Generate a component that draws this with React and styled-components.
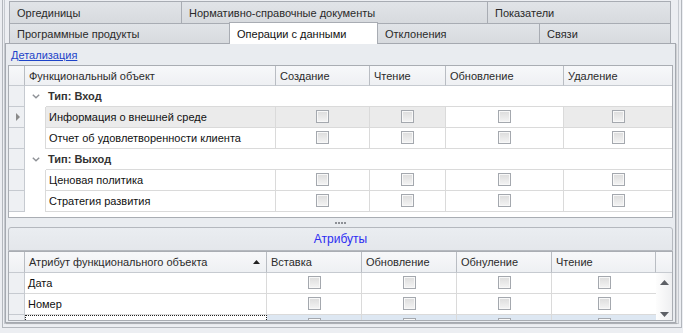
import React from 'react';
import styled, { createGlobalStyle } from 'styled-components';

const GlobalStyle = createGlobalStyle`
  html, body {
    margin: 0;
    padding: 0;
    background: #eceef2;
  }
  body {
    font-family: 'Liberation Sans', Arial, sans-serif;
    font-size: 11px;
    color: #1e1e1e;
  }
  * {
    box-sizing: border-box;
  }
`;

const Screen = styled.div`
  width: 683px;
  height: 333px;
  overflow: hidden;
  background: #eceef2;
`;

const OuterFrame = styled.div`
  margin-left: 2px;
  width: 680px;
  height: 328px;
  border: 1px solid #b3b7bd;
  border-top: 0;
  padding: 0 3px 3px 1px;
  display: flex;
`;

const InnerFrame = styled.div`
  flex: 1;
  min-height: 0;
  display: flex;
  flex-direction: column;
  border: 1px solid #c5c9cf;
  border-top: 0;
  padding-right: 2px;
`;

const TabStrip = styled.div`
  display: flex;
  flex-direction: column;
  padding: 1px 0 0 4px;
`;

const TabRow = styled.div`
  display: flex;
  height: ${(p) => p.$h}px;
`;

const Tab = styled.div`
  width: ${(p) => p.$w}px;
  display: flex;
  align-items: center;
  padding-left: 7px;
  border-top: 1px solid #a8acb3;
  border-left: 1px solid #a8acb3;
  border-right: ${(p) => (p.$last ? '1px solid #a8acb3' : '0')};
  background: linear-gradient(#e1e4e8, #d7dade);
  color: #2a2a2a;
  white-space: nowrap;

  &.active {
    position: relative;
    z-index: 1;
    margin-top: -1px;
    height: 22px;
    border-right: 1px solid #a8acb3;
    background: #fff;
    color: #111;
  }
  &.active + & {
    border-left: 0;
  }
`;

const Panel = styled.div`
  flex: 1;
  min-height: 0;
  display: flex;
  flex-direction: column;
  border: 1px solid #a5a9b0;
  background: #e9ecf0;
  box-shadow: 1px 1px 1px rgba(0, 0, 0, 0.12);
  padding: 0 1px 1px 1px;
`;

const LinkRow = styled.div`
  height: 21px;
  flex: none;
  display: flex;
  align-items: center;
  padding-left: 4px;
`;

const DetailLink = styled.a`
  color: #1d43c9;
  text-decoration: underline;
  cursor: pointer;
`;

const GridBox = styled.div`
  margin: 0 1px;
  height: ${(p) => (p.$h ? `${p.$h}px` : 'auto')};
  flex: ${(p) => (p.$h ? 'none' : '1')};
  min-height: 0;
  border: 1px solid #a9adb3;
  background: #fff;
  overflow: hidden;
`;

const Row = styled.div`
  display: grid;
  grid-template-columns: ${(p) => p.$cols};
  height: ${(p) => p.$h || 21}px;
`;

const HeadCell = styled.div`
  display: flex;
  align-items: center;
  justify-content: space-between;
  padding: 0 6px 0 4px;
  background: linear-gradient(#f7f8fa, #eef0f3);
  border-right: 1px solid #b9bdc3;
  border-bottom: 1px solid #c6cad0;
  color: #2b2b2b;
  white-space: nowrap;
  &:last-child {
    border-right: 0;
  }
`;

const Indicator = styled.div`
  display: flex;
  align-items: center;
  justify-content: center;
  background: #eef0f3;
  border-right: 1px solid #c6cad0;
  border-bottom: 1px solid #c6cad0;
`;

const Indent = styled.div`
  display: flex;
  align-items: center;
  justify-content: center;
  border-right: ${(p) => (p.$line ? '1px solid #dadada' : '0')};
`;

const Cell = styled.div`
  display: flex;
  align-items: ${(p) => (p.$top ? 'flex-start' : 'center')};
  padding-top: ${(p) => (p.$top ? 3 : 0)}px;
  justify-content: ${(p) => (p.$center ? 'center' : 'flex-start')};
  padding-left: ${(p) => (p.$center ? 0 : 3)}px;
  border-right: 1px solid #dadada;
  border-bottom: 1px solid #dadada;
  background: ${(p) => p.$bg || '#fff'};
  color: #111;
  white-space: nowrap;
  &:last-child {
    border-right: 0;
  }
`;

const FocusCell = styled(Cell)`
  border: 1px dotted #222;
  border-bottom: 0;
`;

const GroupCell = styled.div`
  display: flex;
  align-items: center;
  padding-left: 2px;
  font-weight: bold;
  color: #333;
  border-bottom: 1px solid #dadada;
`;

const RowMark = styled.span`
  width: 0;
  height: 0;
  border-left: 4px solid #8a8a8a;
  border-top: 4px solid transparent;
  border-bottom: 4px solid transparent;
  margin-left: 2px;
`;

const Check = styled.span`
  width: 13px;
  height: 13px;
  margin-top: ${(p) => (p.$cut ? '0' : '-2px')};
  border: 1px solid #a4a8ae;
  background: linear-gradient(#dcdcdc, #f4f4f4);
  box-shadow: inset 0 0 0 1px #f8f8f8;
`;

const Splitter = styled.div`
  height: 9px;
  flex: none;
  display: flex;
  align-items: center;
  justify-content: center;
`;

const Dots = styled.span`
  width: 12px;
  height: 2px;
  background: repeating-linear-gradient(to right, #8d9096 0 2px, transparent 2px 3px);
`;

const SectionHeader = styled.div`
  margin: 0 1px;
  height: 24px;
  flex: none;
  display: flex;
  align-items: center;
  justify-content: center;
  border: 1px solid #b4b8be;
  border-radius: 3px 3px 0 0;
  background: linear-gradient(#eaedf1, #e4e7eb);
  color: #2c2cf2;
  font-size: 12px;
`;

const BodyWrap = styled.div`
  display: flex;
`;

const Rows = styled.div`
  flex: 1;
`;

const ScrollBar = styled.div`
  width: 16px;
  height: 48px;
  display: flex;
  flex-direction: column;
  align-items: center;
  justify-content: space-between;
  padding: 7px 0 4px;
  background: linear-gradient(to right, #fdfdfd, #eeeff1);
`;

const Chevron = () => (
  <svg width="8" height="5" viewBox="0 0 8 5">
    <polyline points="0.8,0.8 4,3.8 7.2,0.8" fill="none" stroke="#8e9196" strokeWidth="1.4" />
  </svg>
);

const SortUp = () => (
  <svg width="7" height="4" viewBox="0 0 7 4">
    <polygon points="0,4 3.5,0 7,4" fill="#222" />
  </svg>
);

const Arrow = ({ down }) => (
  <svg width="9" height="5" viewBox="0 0 9 5">
    <polygon points={down ? '0,0 9,0 4.5,5' : '0,5 9,5 4.5,0'} fill="#5d6066" />
  </svg>
);

const upperHead = '16px 251px 94px 76px 118px 108px';
const upperBody = '16px 21px 230px 94px 76px 118px 108px';
const upperGroup = '16px 21px 1fr';
const lowerHead = '16px 242px 95px 95px 95px 104px 16px';
const lowerBody = '16px 242px 95px 95px 95px 104px';

const groups = [
  {
    title: 'Тип: Вход',
    rows: ['Информация о внешней среде', 'Отчет об удовлетворенности клиента'],
  },
  {
    title: 'Тип: Выход',
    rows: ['Ценовая политика', 'Стратегия развития'],
  },
];

const FOCUS = '#ebebeb';

function UpperGrid() {
  return (
    <GridBox $h={153}>
      <Row $cols={upperHead} $h={20}>
        <HeadCell />
        <HeadCell>Функциональный объект</HeadCell>
        <HeadCell>Создание</HeadCell>
        <HeadCell>Чтение</HeadCell>
        <HeadCell>Обновление</HeadCell>
        <HeadCell>Удаление</HeadCell>
      </Row>
      {groups.map((g, gi) => (
        <React.Fragment key={g.title}>
          <Row $cols={upperGroup}>
            <Indicator />
            <Indent>
              <Chevron />
            </Indent>
            <GroupCell>{g.title}</GroupCell>
          </Row>
          {g.rows.map((name, ri) => {
            const focused = gi === 0 && ri === 0;
            const bg = focused ? FOCUS : '#fff';
            return (
              <Row $cols={upperBody} key={name}>
                <Indicator>{focused && <RowMark />}</Indicator>
                <Indent $line />
                <Cell $bg={bg}>{name}</Cell>
                <Cell $center $bg={bg}><Check /></Cell>
                <Cell $center $bg={bg}><Check /></Cell>
                <Cell $center><Check /></Cell>
                <Cell $center $bg={bg}><Check /></Cell>
              </Row>
            );
          })}
        </React.Fragment>
      ))}
    </GridBox>
  );
}

const attrs = ['Дата', 'Номер'];

function LowerGrid() {
  return (
    <GridBox>
      <Row $cols={lowerHead} $h={21}>
        <HeadCell />
        <HeadCell>
          Атрибут функционального объекта
          <SortUp />
        </HeadCell>
        <HeadCell>Вставка</HeadCell>
        <HeadCell>Обновление</HeadCell>
        <HeadCell>Обнуление</HeadCell>
        <HeadCell>Чтение</HeadCell>
        <HeadCell />
      </Row>
      <BodyWrap>
        <Rows>
          {attrs.map((a) => (
            <Row $cols={lowerBody} key={a}>
              <Indicator />
              <Cell>{a}</Cell>
              <Cell $center><Check /></Cell>
              <Cell $center><Check /></Cell>
              <Cell $center><Check /></Cell>
              <Cell $center><Check /></Cell>
            </Row>
          ))}
          <Row $cols={lowerBody}>
            <Indicator />
            <FocusCell />
            <Cell $center $top $bg="#dde7f2"><Check $cut /></Cell>
            <Cell $center $top $bg="#dde7f2"><Check $cut /></Cell>
            <Cell $center $top $bg="#dde7f2"><Check $cut /></Cell>
            <Cell $center $top $bg="#dde7f2"><Check $cut /></Cell>
          </Row>
        </Rows>
        <ScrollBar>
          <Arrow />
          <Arrow down />
        </ScrollBar>
      </BodyWrap>
    </GridBox>
  );
}

export default function App() {
  return (
    <Screen>
      <GlobalStyle />
      <OuterFrame>
        <InnerFrame>
          <TabStrip>
            <TabRow $h={22}>
              <Tab $w={172}>Оргединицы</Tab>
              <Tab $w={306}>Нормативно-справочные документы</Tab>
              <Tab $w={184} $last>Показатели</Tab>
            </TabRow>
            <TabRow $h={20}>
              <Tab $w={220}>Программные продукты</Tab>
              <Tab $w={149} className="active">Операции с данными</Tab>
              <Tab $w={161}>Отклонения</Tab>
              <Tab $w={132} $last>Связи</Tab>
            </TabRow>
          </TabStrip>
          <Panel>
            <LinkRow>
              <DetailLink>Детализация</DetailLink>
            </LinkRow>
            <UpperGrid />
            <Splitter>
              <Dots />
            </Splitter>
            <SectionHeader>Атрибуты</SectionHeader>
            <LowerGrid />
          </Panel>
        </InnerFrame>
      </OuterFrame>
    </Screen>
  );
}
